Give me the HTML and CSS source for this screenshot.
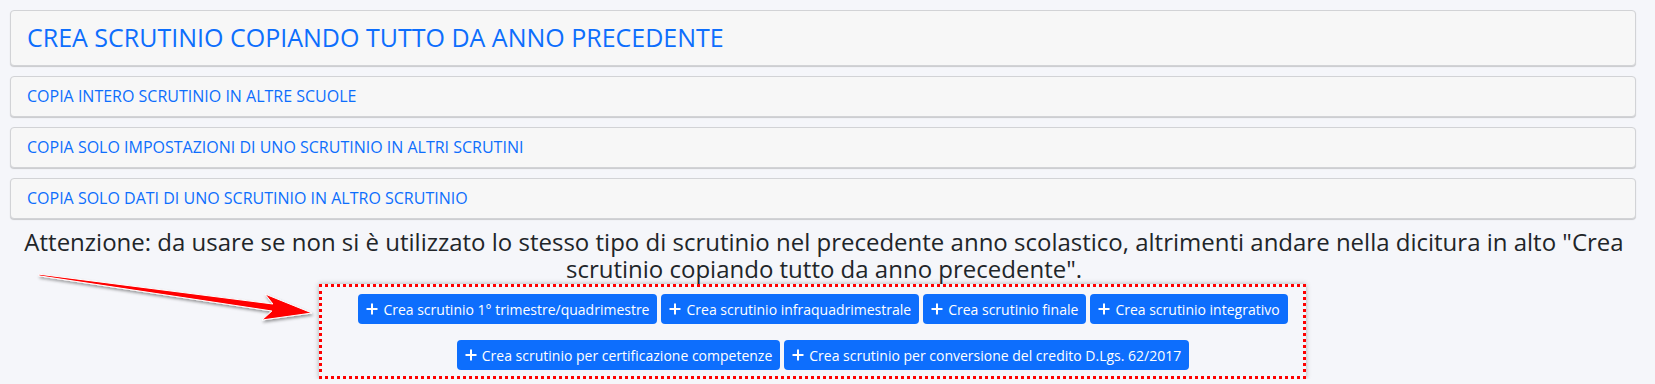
FILE: index.html
```html
<!DOCTYPE html>
<html lang="it">
<head>
    <meta charset="UTF-8">
    <title>Scrutini - copia</title>
    <link rel="stylesheet" href="styles.css">
</head>
<body>
    <div class="page">
        <div class="panel panel-main">
            <a href="#">CREA SCRUTINIO COPIANDO TUTTO DA ANNO PRECEDENTE</a>
        </div>
        <div class="panel">
            <a href="#">COPIA INTERO SCRUTINIO IN ALTRE SCUOLE</a>
        </div>
        <div class="panel">
            <a href="#">COPIA SOLO IMPOSTAZIONI DI UNO SCRUTINIO IN ALTRI SCRUTINI</a>
        </div>
        <div class="panel">
            <a href="#">COPIA SOLO DATI DI UNO SCRUTINIO IN ALTRO SCRUTINIO</a>
        </div>

        <h4 class="notice">Attenzione: da usare se non si è utilizzato lo stesso tipo di scrutinio nel precedente anno scolastico, altrimenti andare nella dicitura in alto "Crea scrutinio copiando tutto da anno precedente".</h4>

        <div class="highlight">
            <div class="btn-row">
                <button class="btn"><svg class="plus" viewBox="0 0 12 12"><path d="M6 0.5v11M0.5 6h11"/></svg>Crea scrutinio 1° trimestre/quadrimestre</button>
                <button class="btn"><svg class="plus" viewBox="0 0 12 12"><path d="M6 0.5v11M0.5 6h11"/></svg>Crea scrutinio infraquadrimestrale</button>
                <button class="btn"><svg class="plus" viewBox="0 0 12 12"><path d="M6 0.5v11M0.5 6h11"/></svg>Crea scrutinio finale</button>
                <button class="btn"><svg class="plus" viewBox="0 0 12 12"><path d="M6 0.5v11M0.5 6h11"/></svg>Crea scrutinio integrativo</button>
            </div>
            <div class="btn-row">
                <button class="btn"><svg class="plus" viewBox="0 0 12 12"><path d="M6 0.5v11M0.5 6h11"/></svg>Crea scrutinio per certificazione competenze</button>
                <button class="btn"><svg class="plus" viewBox="0 0 12 12"><path d="M6 0.5v11M0.5 6h11"/></svg>Crea scrutinio per conversione del credito D.Lgs. 62/2017</button>
            </div>
        </div>
    </div>

    <!-- annotation arrow drawn over the page -->
    <svg class="arrow" width="1655" height="384" viewBox="0 0 1655 384">
        <defs>
            <filter id="arrow-shadow" x="-10%" y="-50%" width="120%" height="200%">
                <feDropShadow dx="1" dy="2" stdDeviation="1.8" flood-color="#000" flood-opacity="0.4"/>
            </filter>
        </defs>
        <polygon filter="url(#arrow-shadow)" points="39.1,274.2 272.9,304 265,294 312,313 262,320 271.9,311 38.9,275.8"/>
    </svg>
</body>
</html>
```

FILE: styles.css
```css
:root {
    --blue: #0d6efd;
    --text: #212529;
    --page-bg: #f5f6fa;
    --panel-bg: #f7f7f7;
    --panel-border: #d2d3d6;
}

* {
    margin: 0;
    padding: 0;
    box-sizing: border-box;
}

body {
    font-family: "Open Sans", "Noto Sans", sans-serif;
    background-color: var(--page-bg);
    color: var(--text);
}

.page {
    padding: 10px 19px 0 10px;
}

.panel {
    background: var(--panel-bg);
    border: 1px solid var(--panel-border);
    border-radius: 4px;
    box-shadow: 0 1px 1px rgba(0, 0, 0, 0.18);
    padding: 9px 16px;
    line-height: 21px;
    font-size: 16px;
    margin-bottom: 10px;
}

.panel a {
    color: var(--blue);
    text-decoration: none;
}

.panel-main {
    padding: 9px 16px 11px;
    line-height: 34px;
    font-size: 25px;
}

.notice {
    font-size: 24px;
    font-weight: 500;
    line-height: 26.5px;
    text-align: center;
    margin-top: 9px;
    padding: 0 12px 0 14px;
}

.highlight {
    width: 987px;
    margin: 2px 0 0 309px;
    border: 3px dotted #f00;
    box-shadow: 0 0 5px rgba(0, 0, 0, 0.3);
    padding: 7px 0 6px 21px;
    display: flex;
    flex-direction: column;
    gap: 16px;
}

.btn-row {
    display: flex;
    justify-content: center;
    gap: 4px;
}

.btn {
    display: flex;
    align-items: center;
    gap: 5px;
    height: 30px;
    padding: 0 8px;
    background: var(--blue);
    color: #fff;
    border: none;
    border-radius: 4px;
    font-family: inherit;
    font-size: 14px;
}

.plus {
    width: 12px;
    height: 12px;
    stroke: #fff;
    stroke-width: 2;
    fill: none;
}

.arrow {
    position: absolute;
    left: 0;
    top: 0;
    pointer-events: none;
}

.arrow polygon {
    fill: #f00;
    stroke: #fff;
    stroke-width: 1;
    stroke-linejoin: round;
}
```
